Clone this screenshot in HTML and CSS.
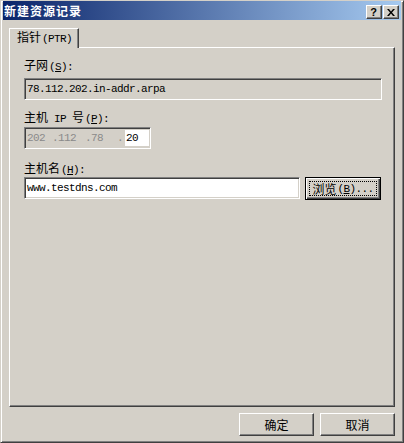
FILE: index.html
```html
<!DOCTYPE html>
<html lang="zh">
<head>
<meta charset="utf-8">
<title>新建资源记录</title>
<link rel="stylesheet" href="styles.css">
</head>
<body>
<div class="window">
  <div class="titlebar">
    <span class="title">新建资源记录</span>
    <div class="caption-btns">
      <span class="cbtn help">?</span>
      <span class="cbtn close">
        <svg width="8" height="7" viewBox="0 0 8 7"><path d="M0 0h2l2 2.5L6 0h2L5 3.5 8 7H6L4 4.5 2 7H0l3-3.5z" fill="#000"/></svg>
      </span>
    </div>
  </div>
  <div class="content">
    <div class="tabs">
      <div class="tab active">指针<span class="l p">(PTR)</span></div>
    </div>
    <div class="panel">
      <div class="label label-subnet">子网<span class="l p">(<u>S</u>):</span></div>
      <div class="field readonly subnet">78.112.202.in-addr.arpa</div>
      <div class="label label-ip">主机<span class="l ipw">IP</span>号<span class="l p">(<u>P</u>):</span></div>
      <div class="field readonly ip">
        <span class="oct o1">202</span>
        <span class="oct o2">.112</span>
        <span class="oct o3">.78</span>
        <span class="oct o4">.</span>
        <span class="oct-edit">20</span>
      </div>
      <div class="label label-host">主机名<span class="l p">(<u>H</u>):</span></div>
      <div class="row">
        <div class="field host">www.testdns.com</div>
        <div class="btn default"><span class="focus">浏览<span class="l p">(<u>B</u>)...</span></span></div>
      </div>
    </div>
    <div class="footer">
      <div class="btn">确定</div>
      <div class="btn">取消</div>
    </div>
  </div>
</div>
</body>
</html>
```

FILE: styles.css
```css
html, body {
  margin: 0;
  padding: 0;
  background: #D4D0C8;
}

body {
  font-family: "Noto Sans CJK SC", "Liberation Sans", sans-serif;
  font-size: 12px;
  color: #000;
}

.window {
  width: 404px;
  height: 443px;
  box-sizing: border-box;
  background: #D4D0C8;
  border: 1px solid;
  border-color: #D4D0C8 #404040 #404040 #D4D0C8;
  box-shadow: inset 1px 1px #fff, inset -1px -1px #808080;
  padding: 0 2px 2px 2px;
  display: flex;
  flex-direction: column;
}

.titlebar {
  height: 19px;
  flex: none;
  display: flex;
  align-items: flex-start;
  justify-content: space-between;
  background: linear-gradient(to right, #0A246A, #A6CAF0);
}

.title {
  color: #fff;
  font-weight: bold;
  font-size: 12px;
  letter-spacing: 1px;
  line-height: 19px;
  padding-left: 1px;
}

.caption-btns {
  display: flex;
  gap: 1px;
  margin-top: 4px;
  margin-right: 2px;
}

.cbtn {
  width: 16px;
  height: 14px;
  box-sizing: border-box;
  background: #D4D0C8;
  border: 1px solid;
  border-color: #fff #404040 #404040 #fff;
  box-shadow: inset -1px -1px #808080;
  display: flex;
  align-items: center;
  justify-content: center;
}

.help {
  font-family: "Liberation Sans", sans-serif;
  font-weight: bold;
  font-size: 11px;
  line-height: 12px;
  padding-right: 1px;
}

.close svg {
  display: block;
  margin-right: 1px;
}

.content {
  flex: 1;
  display: flex;
  flex-direction: column;
  padding: 8px 6px 0 6px;
}

.l {
  font-family: "Liberation Mono", monospace;
  font-size: 11px;
  letter-spacing: -0.6px;
}

.l.p {
  padding-left: 1px;
}

.l.ipw {
  padding: 0 6px;
}

.tabs {
  display: flex;
  height: 19px;
}

.tab {
  position: relative;
  z-index: 1;
  width: 70px;
  height: 20px;
  box-sizing: border-box;
  background: #D4D0C8;
  border-top: 1px solid #fff;
  border-left: 1px solid #fff;
  border-right: 1px solid #404040;
  box-shadow: inset -1px 0 #808080;
  padding-left: 7px;
  line-height: 16px;
  white-space: nowrap;
}

.panel {
  height: 360px;
  box-sizing: border-box;
  border: 1px solid;
  border-color: #fff #404040 #404040 #fff;
  box-shadow: inset -1px -1px #808080;
  padding: 10px 0 0 14px;
  display: flex;
  flex-direction: column;
  align-items: flex-start;
}

.label {
  line-height: 14px;
  height: 14px;
  white-space: nowrap;
}

.label-ip { margin-top: 10px; }
.label-host { margin-top: 12px; }

.field {
  height: 22px;
  box-sizing: border-box;
  border: 1px solid;
  border-color: #808080 #fff #fff #808080;
  box-shadow: inset 1px 1px #404040, inset -1px -1px #D4D0C8;
  background: #fff;
  font-family: "Liberation Mono", monospace;
  font-size: 11px;
  letter-spacing: -0.6px;
  line-height: 20px;
  padding: 0 2px;
  white-space: nowrap;
}

.readonly {
  background: #D4D0C8;
}

.subnet {
  width: 358px;
  margin-top: 6px;
}

.ip {
  width: 127px;
  margin-top: 3px;
  display: flex;
  padding: 2px 1px 2px 2px;
  line-height: 16px;
  color: #8a8a8a;
}

.oct { display: block; flex: none; }
.o1 { width: 25px; }
.o2 { width: 33px; }
.o3 { width: 32px; }
.o4 { width: 8px; }

.oct-edit {
  flex: 1;
  background: #fff;
  color: #000;
  padding-left: 1px;
}

.row {
  display: flex;
  gap: 5px;
  margin-top: 2px;
}

.host {
  width: 276px;
}

.btn {
  width: 75px;
  height: 23px;
  box-sizing: border-box;
  background: #D4D0C8;
  border: 1px solid;
  border-color: #fff #404040 #404040 #fff;
  box-shadow: inset -1px -1px #808080;
  display: flex;
  align-items: center;
  justify-content: center;
  line-height: 14px;
  white-space: nowrap;
}

.btn.default {
  width: 76px;
  border-color: #000;
  box-shadow: inset 1px 1px #fff, inset -1px -1px #404040, inset -2px -2px #808080;
  padding: 3px;
  align-items: stretch;
}

.focus {
  flex: 1;
  border: 1px dotted #000;
  display: flex;
  align-items: center;
  justify-content: center;
}

.footer {
  display: flex;
  justify-content: flex-end;
  gap: 6px;
  margin-top: 6px;
}
```
